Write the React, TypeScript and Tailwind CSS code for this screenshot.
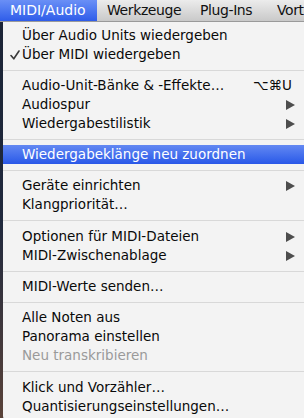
import React from "react";

type Item =
  | { kind: "sep"; tall?: boolean }
  | {
      kind: "item";
      label: string;
      check?: boolean;
      shortcut?: string;
      sub?: boolean;
      disabled?: boolean;
      active?: boolean;
    };

const items: Item[] = [
  { kind: "item", label: "Über Audio Units wiedergeben" },
  { kind: "item", label: "Über MIDI wiedergeben", check: true },
  { kind: "sep" },
  { kind: "item", label: "Audio-Unit-Bänke & -Effekte…", shortcut: "⌥⌘U" },
  { kind: "item", label: "Audiospur", sub: true },
  { kind: "item", label: "Wiedergabestilistik", sub: true },
  { kind: "sep" },
  { kind: "item", label: "Wiedergabeklänge neu zuordnen", active: true },
  { kind: "sep" },
  { kind: "item", label: "Geräte einrichten", sub: true },
  { kind: "item", label: "Klangpriorität…" },
  { kind: "sep", tall: true },
  { kind: "item", label: "Optionen für MIDI-Dateien", sub: true },
  { kind: "item", label: "MIDI-Zwischenablage", sub: true },
  { kind: "sep" },
  { kind: "item", label: "MIDI-Werte senden…" },
  { kind: "sep" },
  { kind: "item", label: "Alle Noten aus" },
  { kind: "item", label: "Panorama einstellen" },
  { kind: "item", label: "Neu transkribieren", disabled: true },
  { kind: "sep", tall: true },
  { kind: "item", label: "Klick und Vorzähler…" },
  { kind: "item", label: "Quantisierungseinstellungen…" },
];

function Arrow() {
  return (
    <svg width="9" height="10" viewBox="0 0 9 10" className="block">
      <path d="M0 0 L9 5 L0 10 Z" fill="#4d4d4d" />
    </svg>
  );
}

function Check() {
  return (
    <svg width="10" height="10" viewBox="0 0 10 10" className="absolute left-[7px] top-[5px]">
      <path d="M1 5.5 L3.8 8.8 L9 1" fill="none" stroke="#3a3a3a" strokeWidth="1.6" strokeLinecap="round" strokeLinejoin="round" />
    </svg>
  );
}

export default function App() {
  return (
    <div
      className="w-[304px] h-[418px] overflow-hidden flex flex-col bg-[#1b2233]"
      style={{ fontFamily: '"DejaVu Sans", "Noto Sans", sans-serif' }}
    >
      <div className="h-[22px] flex items-stretch bg-gradient-to-b from-[#ececec] to-[#c9c9c9] border-b border-[#9a9a9a] text-[14px] tracking-[-0.4px] text-[#111] shrink-0 whitespace-nowrap">
        <div className="w-[97px] shrink-0 flex items-center pl-[10px] bg-gradient-to-b from-[#6a8ff6] to-[#2f5ce9] text-white tracking-normal">
          MIDI/Audio
        </div>
        <div className="w-[93px] pl-[10px] shrink-0 flex items-center">Werkzeuge</div>
        <div className="w-[77px] pl-[10px] shrink-0 flex items-center">Plug-Ins</div>
        <div className="pl-[10px] shrink-0 flex items-center">Vorteile</div>
      </div>
      <div className="flex-1 flex">
        <div className="w-[3px] bg-gradient-to-b from-[#1b2436] via-[#20293d] to-[#5a4238]" />
        <div className="flex-1 bg-[#f3f3f3] rounded-bl-[5px] pt-[4px] pb-[5px] text-[13.5px] leading-[19px] text-[#0a0a0a] self-start">
          {items.map((it, i) =>
            it.kind === "sep" ? (
              <div key={i} className={(it.tall ? "h-[13px]" : "h-[12px]") + " flex items-center"}>
                <div className="h-px w-full bg-[#d8d8d8]" />
              </div>
            ) : (
              <div
                key={i}
                className={
                  "h-[19px] flex items-center relative pl-[19px] pr-[9px] " +
                  (it.active
                    ? "bg-gradient-to-b from-[#6388f2] to-[#2957e8] text-white"
                    : it.disabled
                    ? "text-[#9a9a9a]"
                    : "")
                }
              >
                {it.check && <Check />}
                <span className="flex-1 whitespace-nowrap">{it.label}</span>
                {it.shortcut && (
                  <span className="whitespace-nowrap mr-[3px]">{it.shortcut}</span>
                )}
                {it.sub && <Arrow />}
              </div>
            )
          )}
        </div>
      </div>
    </div>
  );
}
